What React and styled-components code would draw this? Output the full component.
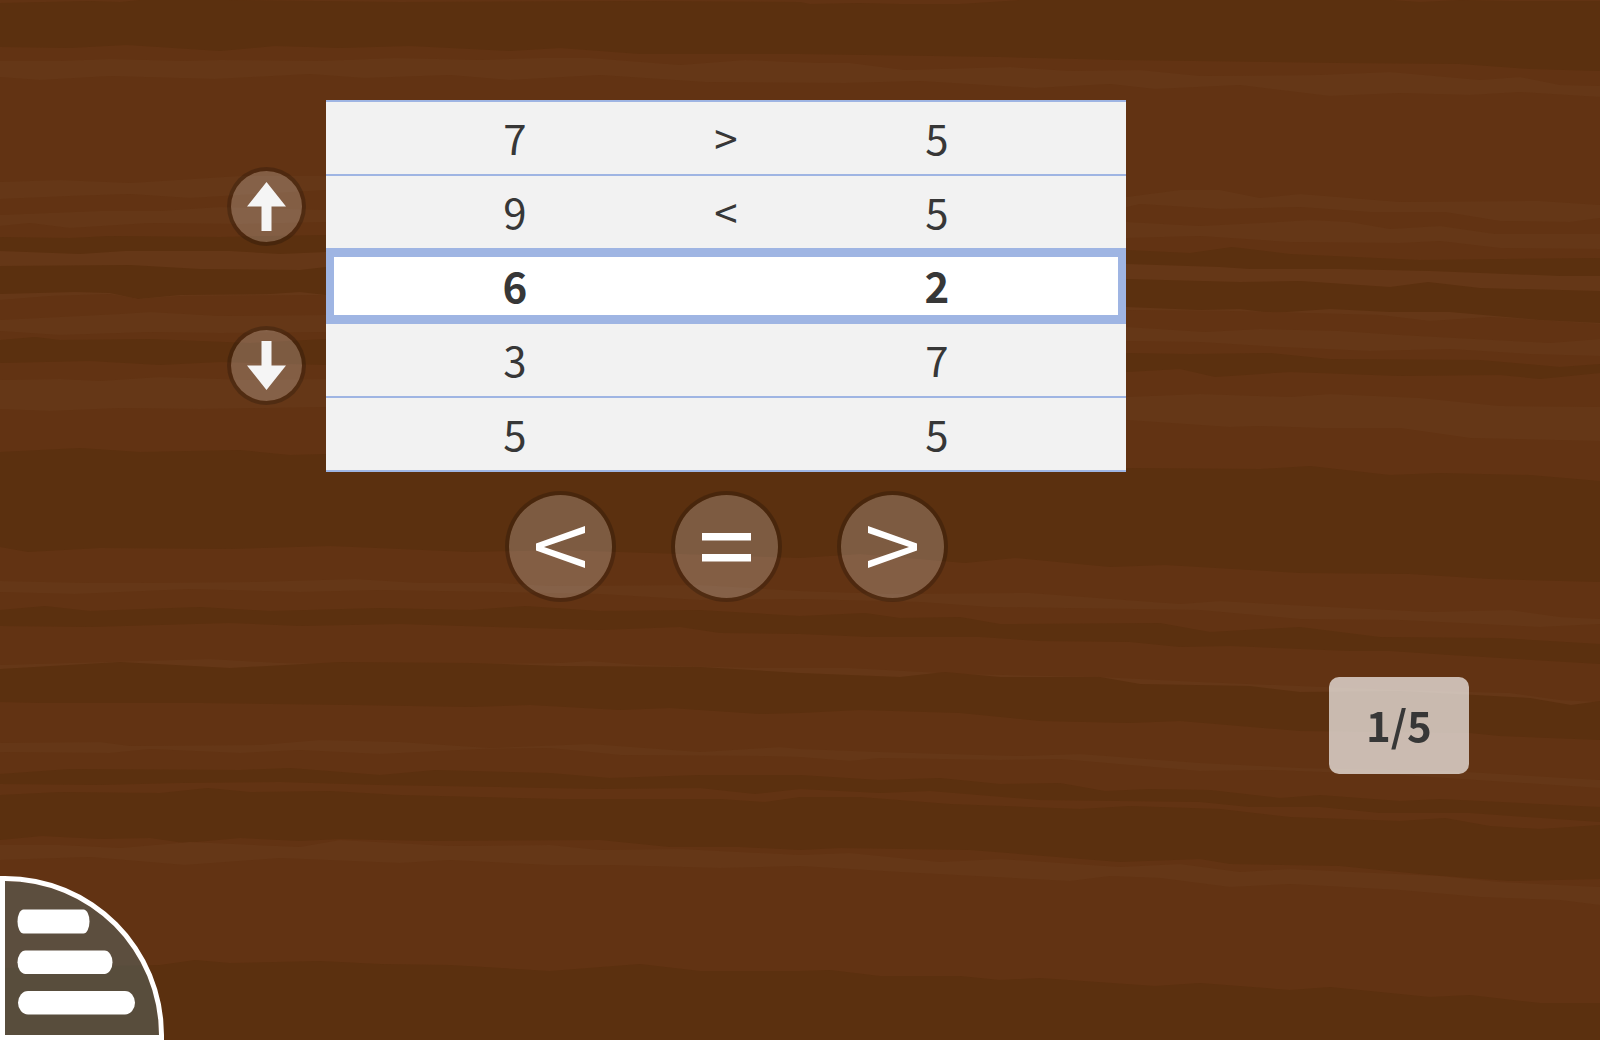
import React, { useState } from 'react';
import styled, { createGlobalStyle } from 'styled-components';

const GlobalStyle = createGlobalStyle`
  *, *::before, *::after { box-sizing: border-box; }
  html, body, #root { height: 100%; }
  body {
    margin: 0;
    background: #5b300f;
    color: #373737;
    font-family: 'Noto Sans CJK SC', 'Noto Sans', sans-serif;
    overflow: hidden;
  }
`;

const DARK = '#5b300f';
const MID = '#623313';
const LIGHT = '#653717';

/* Each grain starts at its upper edge and is covered by the next one. */
const GRAINS = [
  [DARK, '0,3 90,1 120,2 140,0 225,0 400,2 640,1 800,2 810,4 860,3 900,4 960,4 1020,0 1390,0 1420,2 1460,0 1510,1 1600,1'],
  [MID, '0,47 70,48 127,45 220,51 275,46 340,48 410,46 510,51 560,48 640,54 800,54 1000,57 1120,60 1340,63 1460,64 1530,69 1600,71'],
  [LIGHT, '0,61 60,61 110,59 185,61 220,60 320,61 395,58 480,60 540,58 590,58 680,65 745,60 820,63 850,63 905,70 1010,67 1070,71 1140,70 1200,76 1320,75 1390,72 1480,80 1520,77 1560,85 1600,86'],
  [MID, '0,77 40,80 110,76 215,79 310,74 365,78 450,75 510,80 600,75 705,82 845,83 920,81 1035,88 1110,84 1155,89 1240,85 1330,96 1400,93 1470,95 1520,92 1600,97'],
  [LIGHT, '0,182 60,180 130,183 240,176 320,176 1127,197 1180,190 1220,190 1260,198 1300,194 1400,202 1540,201 1600,205'],
  [MID, '0,199 70,196 130,194 190,198 240,195 326,190 1127,207 1140,204 1220,209 1300,207 1370,212 1445,212 1500,221 1570,222 1600,218'],
  [LIGHT, '0,215 100,211 160,211 220,207 326,210 1127,222 1200,226 1260,223 1310,220 1350,222 1390,229 1440,226 1495,234 1600,234'],
  [MID, '0,226 30,223 70,228 150,223 240,224 326,222 1127,238 1200,236 1290,242 1400,243 1440,241 1500,248 1600,249'],
  [DARK, '0,237 70,238 110,236 220,237 326,235 1127,250 1190,253 1232,247 1290,254 1420,260 1600,258'],
  [LIGHT, '0,251 80,254 125,251 230,251 280,254 326,252 1127,264 1220,267 1250,269 1340,269 1430,271 1560,276 1600,276'],
  [DARK, '0,266 130,265 200,269 300,270 326,267 1127,279 1240,282 1300,281 1390,287 1428,282 1480,288 1600,291'],
  [LIGHT, '0,294 75,292 110,293 138,299 180,295 270,294 300,292 326,295 1127,307 1200,310 1240,309 1272,313 1330,309 1390,312 1450,312 1540,320 1600,323'],
  [MID, '0,300 50,296 110,294 138,299 180,296 326,295 1127,310 1230,311 1380,315 1430,321 1490,317 1600,324'],
  [LIGHT, '0,320 60,317 120,314 150,312 220,316 326,315 1127,327 1205,332 1260,329 1340,331 1400,335 1550,343 1600,339'],
  [MID, '0,331 60,335 150,332 220,333 326,332 1127,341 1200,342 1280,347 1370,351 1450,349 1530,354 1600,356'],
  [DARK, '0,340 35,337 60,340 150,339 250,343 326,339 1127,353 1190,354 1270,353 1330,359 1480,360 1560,367 1600,364'],
  [MID, '0,363 90,361 160,365 220,362 326,365 1127,372 1180,369 1215,377 1290,372 1400,376 1500,375 1540,379 1600,373'],
  [LIGHT, '0,380 60,379 100,381 160,377 250,380 326,379 1127,397 1200,394 1290,397 1330,394 1420,398 1500,406 1600,407'],
  [MID, '0,409 50,411 120,408 200,409 326,407 1127,420 1230,427 1260,426 1320,428 1400,428 1470,438 1600,441'],
  [DARK, '0,452 80,448 140,452 240,450 290,455 326,454 1127,468 1260,469 1310,466 1390,475 1440,473 1530,475 1600,481'],
  [MID, '0,547 28,552 100,548 230,549 330,546 470,552 560,550 800,558 860,554 965,563 1015,558 1110,567 1165,565 1300,573 1410,574 1490,579 1600,582'],
  [LIGHT, '0,581 90,583 140,583 250,582 355,579 420,583 500,583 550,586 700,585 800,591 890,594 1030,593 1180,604 1220,601 1290,605 1330,607 1430,612 1510,610 1560,617 1600,619'],
  [MID, '0,592 75,594 190,589 300,592 380,590 500,592 600,594 700,600 800,599 920,602 990,607 1200,610 1300,619 1400,620 1540,627 1600,624'],
  [DARK, '0,610 45,606 90,611 200,607 270,611 380,608 470,610 525,606 600,611 700,610 800,616 865,613 900,618 960,617 1000,624 1160,623 1210,632 1300,627 1380,637 1500,638 1600,644'],
  [MID, '0,626 90,627 230,623 300,626 400,624 530,628 600,630 680,627 720,633 800,634 870,637 980,637 1040,641 1130,642 1180,647 1230,646 1350,651 1390,651 1450,655 1600,664'],
  [LIGHT, '0,665 140,661 210,659 280,663 400,664 440,664 560,663 590,661 640,665 760,668 850,668 960,674 1100,677 1200,682 1300,686 1400,690 1510,693 1560,700 1600,702'],
  [DARK, '0,669 120,662 230,668 340,662 470,663 560,666 700,667 800,673 900,677 945,672 1000,677 1100,677 1140,684 1250,686 1300,692 1400,691 1530,698 1571,705 1600,701'],
  [MID, '0,702 40,703 200,703 350,705 470,707 530,705 620,710 670,708 760,714 800,713 860,710 960,713 1040,721 1130,723 1180,721 1300,731 1470,733 1500,736 1600,740'],
  [LIGHT, '0,743 100,742 130,746 260,745 320,740 400,742 490,748 590,744 700,752 780,747 800,749 880,752 1020,756 1080,754 1200,763 1300,768 1450,771 1600,780'],
  [MID, '0,752 110,753 150,749 240,753 300,750 380,754 480,749 550,748 620,755 760,756 800,757 850,761 880,758 1000,760 1060,759 1200,771 1270,770 1400,775 1600,788'],
  [DARK, '0,774 70,769 240,770 290,768 380,775 435,770 550,773 610,778 700,775 800,775 880,780 940,778 1000,784 1060,783 1105,791 1150,789 1210,790 1280,798 1320,795 1400,801 1440,799 1600,807'],
  [MID, '0,784 100,785 180,783 280,782 380,785 500,787 600,789 700,788 755,794 800,789 880,793 930,791 1040,800 1200,802 1250,807 1320,807 1380,813 1470,813 1600,822'],
  [DARK, '0,795 60,792 160,793 208,788 250,792 330,791 400,795 560,799 720,799 765,802 800,797 860,797 950,804 1080,809 1130,806 1220,809 1290,817 1400,821 1445,818 1490,826 1540,829 1600,825'],
  [MID, '0,840 42,836 100,839 150,838 185,843 240,838 300,841 340,839 430,841 600,840 670,847 740,847 800,850 840,848 970,850 1120,862 1200,859 1230,864 1340,866 1430,875 1510,881 1600,879'],
  [LIGHT, '0,845 60,845 120,848 190,842 300,847 340,840 450,846 550,845 600,850 680,849 800,855 850,853 940,862 1000,859 1120,867 1180,864 1240,872 1290,869 1440,876 1500,882 1600,887'],
  [MID, '0,860 90,857 185,865 280,858 400,863 450,860 550,865 610,865 720,868 800,866 900,872 1070,881 1110,876 1160,878 1230,887 1290,884 1400,890 1480,897 1560,900 1600,905'],
  [DARK, '0,968 100,966 160,965 195,960 230,963 320,961 380,964 450,965 550,971 640,964 700,971 800,971 830,970 880,976 960,976 1000,980 1040,978 1155,986 1200,983 1290,990 1330,987 1430,997 1470,995 1540,1003 1600,1003'],
];

const Wood = styled.svg`
  position: fixed;
  inset: 0;
  z-index: -1;
  width: 100%;
  height: 100%;
`;

const Page = styled.main`
  min-height: 100%;
  display: flex;
  flex-direction: column;
  padding-top: 100px;
`;

const Play = styled.section`
  display: grid;
  grid-template-columns: 326px 50% 1fr;
  align-items: center;
  row-gap: 19px;
`;

const Steps = styled.nav`
  display: flex;
  flex-direction: column;
  align-items: flex-end;
  gap: 80px;
  padding-right: 20px;
`;

const RoundButton = styled.button`
  display: flex;
  align-items: center;
  justify-content: center;
  width: ${(p) => p.$size}px;
  height: ${(p) => p.$size}px;
  padding: 0;
  border: 4px solid rgba(0, 0, 0, 0.2);
  border-radius: 50%;
  background: rgba(255, 255, 255, 0.21);
  background-clip: padding-box;
  cursor: pointer;
`;

const Icon = styled.svg`
  display: block;
  flex: none;
`;

const Board = styled.table`
  display: block;
  border-bottom: 2px solid #9fb5e3;
  font-size: 42px;
  line-height: 70px;
  text-align: center;
`;

const Rows = styled.tbody`
  display: block;
`;

const Row = styled.tr`
  position: relative;
  z-index: ${(p) => (p.$current ? 1 : 0)};
  display: grid;
  grid-template-columns: 1fr 44px 1fr;
  height: 74px;
  border-top: 2px solid #9fb5e3;
  background: ${(p) => (p.$current ? '#ffffff' : '#f2f2f2')};
  font-weight: ${(p) => (p.$current ? 700 : 400)};

  &::after {
    content: '';
    display: ${(p) => (p.$current ? 'block' : 'none')};
    position: absolute;
    inset: -2px 0;
    border: solid #9fb5e3;
    border-width: 9px 8px;
  }
`;

const Cell = styled.td`
  padding: 0;
`;

const Symbols = styled.div`
  grid-column: 2;
  display: flex;
  justify-content: center;
  gap: 55px;
`;

const Score = styled.output`
  align-self: flex-end;
  min-width: 140px;
  margin: 75px 131px 0 0;
  padding-bottom: 4px;
  border-radius: 10px;
  background: rgba(255, 255, 255, 0.67);
  font-size: 42px;
  line-height: 93px;
  font-weight: 700;
  text-align: center;
`;

const MenuButton = styled.button`
  position: fixed;
  left: 0;
  bottom: 0;
  padding: 0;
  border: 0;
  background: none;
  cursor: pointer;
`;

const SHAPES = {
  '<': 'M49 0V7L8 21L49 35V42L0 24.500V17.500Z',
  '=': 'M0 7H49V14.500H0ZM0 28H49V35.500H0Z',
  '>': 'M0 0V7L41 21L0 35V42L49 24.500V17.500Z',
};

const NAMES = { '<': 'Less than', '=': 'Equal', '>': 'Greater than' };

const START = [
  [7, '>', 5],
  [9, '<', 5],
  [6, '', 2],
  [3, '', 7],
  [5, '', 5],
];

function Background() {
  return (
    <Wood viewBox="0 0 1600 1040" preserveAspectRatio="none" aria-hidden="true">
      <rect width="1600" height="1040" fill={MID} />
      {GRAINS.map(([fill, edge]) => (
        <polygon key={edge} fill={fill} points={`${edge} 1600,1040 0,1040`} />
      ))}
    </Wood>
  );
}

export default function App() {
  const [rows, setRows] = useState(START);
  const [current, setCurrent] = useState(2);

  const move = (by) => setCurrent((c) => Math.min(rows.length - 1, Math.max(0, c + by)));
  const choose = (symbol) =>
    setRows((all) => all.map((r, i) => (i === current ? [r[0], symbol, r[2]] : r)));

  return (
    <>
      <GlobalStyle />
      <Background />
      <Page>
        <Play>
          <Steps aria-label="Rows">
            <RoundButton $size={79} aria-label="Previous row" onClick={() => move(-1)}>
              <Icon width="39" height="49" viewBox="0 0 39 49">
                <path fill="#f5f5f5" d="M19.500 0L39 24.500H24.500V49H14.500V24.500H0Z" />
              </Icon>
            </RoundButton>
            <RoundButton $size={79} aria-label="Next row" onClick={() => move(1)}>
              <Icon width="39" height="49" viewBox="0 0 39 49">
                <path fill="#f5f5f5" d="M19.500 49L39 24.500H24.500V0H14.500V24.500H0Z" />
              </Icon>
            </RoundButton>
          </Steps>
          <Board>
            <Rows>
              {rows.map(([left, symbol, right], i) => (
                <Row key={i} $current={i === current}>
                  <Cell>{left}</Cell>
                  <Cell>{symbol}</Cell>
                  <Cell>{right}</Cell>
                </Row>
              ))}
            </Rows>
          </Board>
          <Symbols>
            {Object.keys(SHAPES).map((symbol) => (
              <RoundButton
                key={symbol}
                $size={111}
                aria-label={NAMES[symbol]}
                onClick={() => choose(symbol)}
              >
                <Icon width="49" height="42" viewBox="0 0 49 42">
                  <path fill="#ffffff" d={SHAPES[symbol]} />
                </Icon>
              </RoundButton>
            ))}
          </Symbols>
        </Play>
        <Score>1/5</Score>
      </Page>
      <MenuButton aria-label="Menu">
        <Icon width="164" height="164" viewBox="0 0 164 164">
          <path fill="rgba(85, 105, 106, 0.5)" d="M5 5A154 154 0 0 1 159 159H5Z" />
          <path
            fill="#ffffff"
            fillRule="evenodd"
            d="M0 0H5A159 159 0 0 1 164 159V164H0ZM5 5V159H159A154 154 0 0 0 5 5Z"
          />
          <g fill="#ffffff">
            <rect x="17.500" y="33.500" width="72" height="24" rx="6" ry="12" />
            <rect x="17.500" y="74.500" width="95" height="23.500" rx="8" ry="12" />
            <rect x="18" y="115" width="117" height="23.500" rx="10" ry="12" />
          </g>
        </Icon>
      </MenuButton>
    </>
  );
}
